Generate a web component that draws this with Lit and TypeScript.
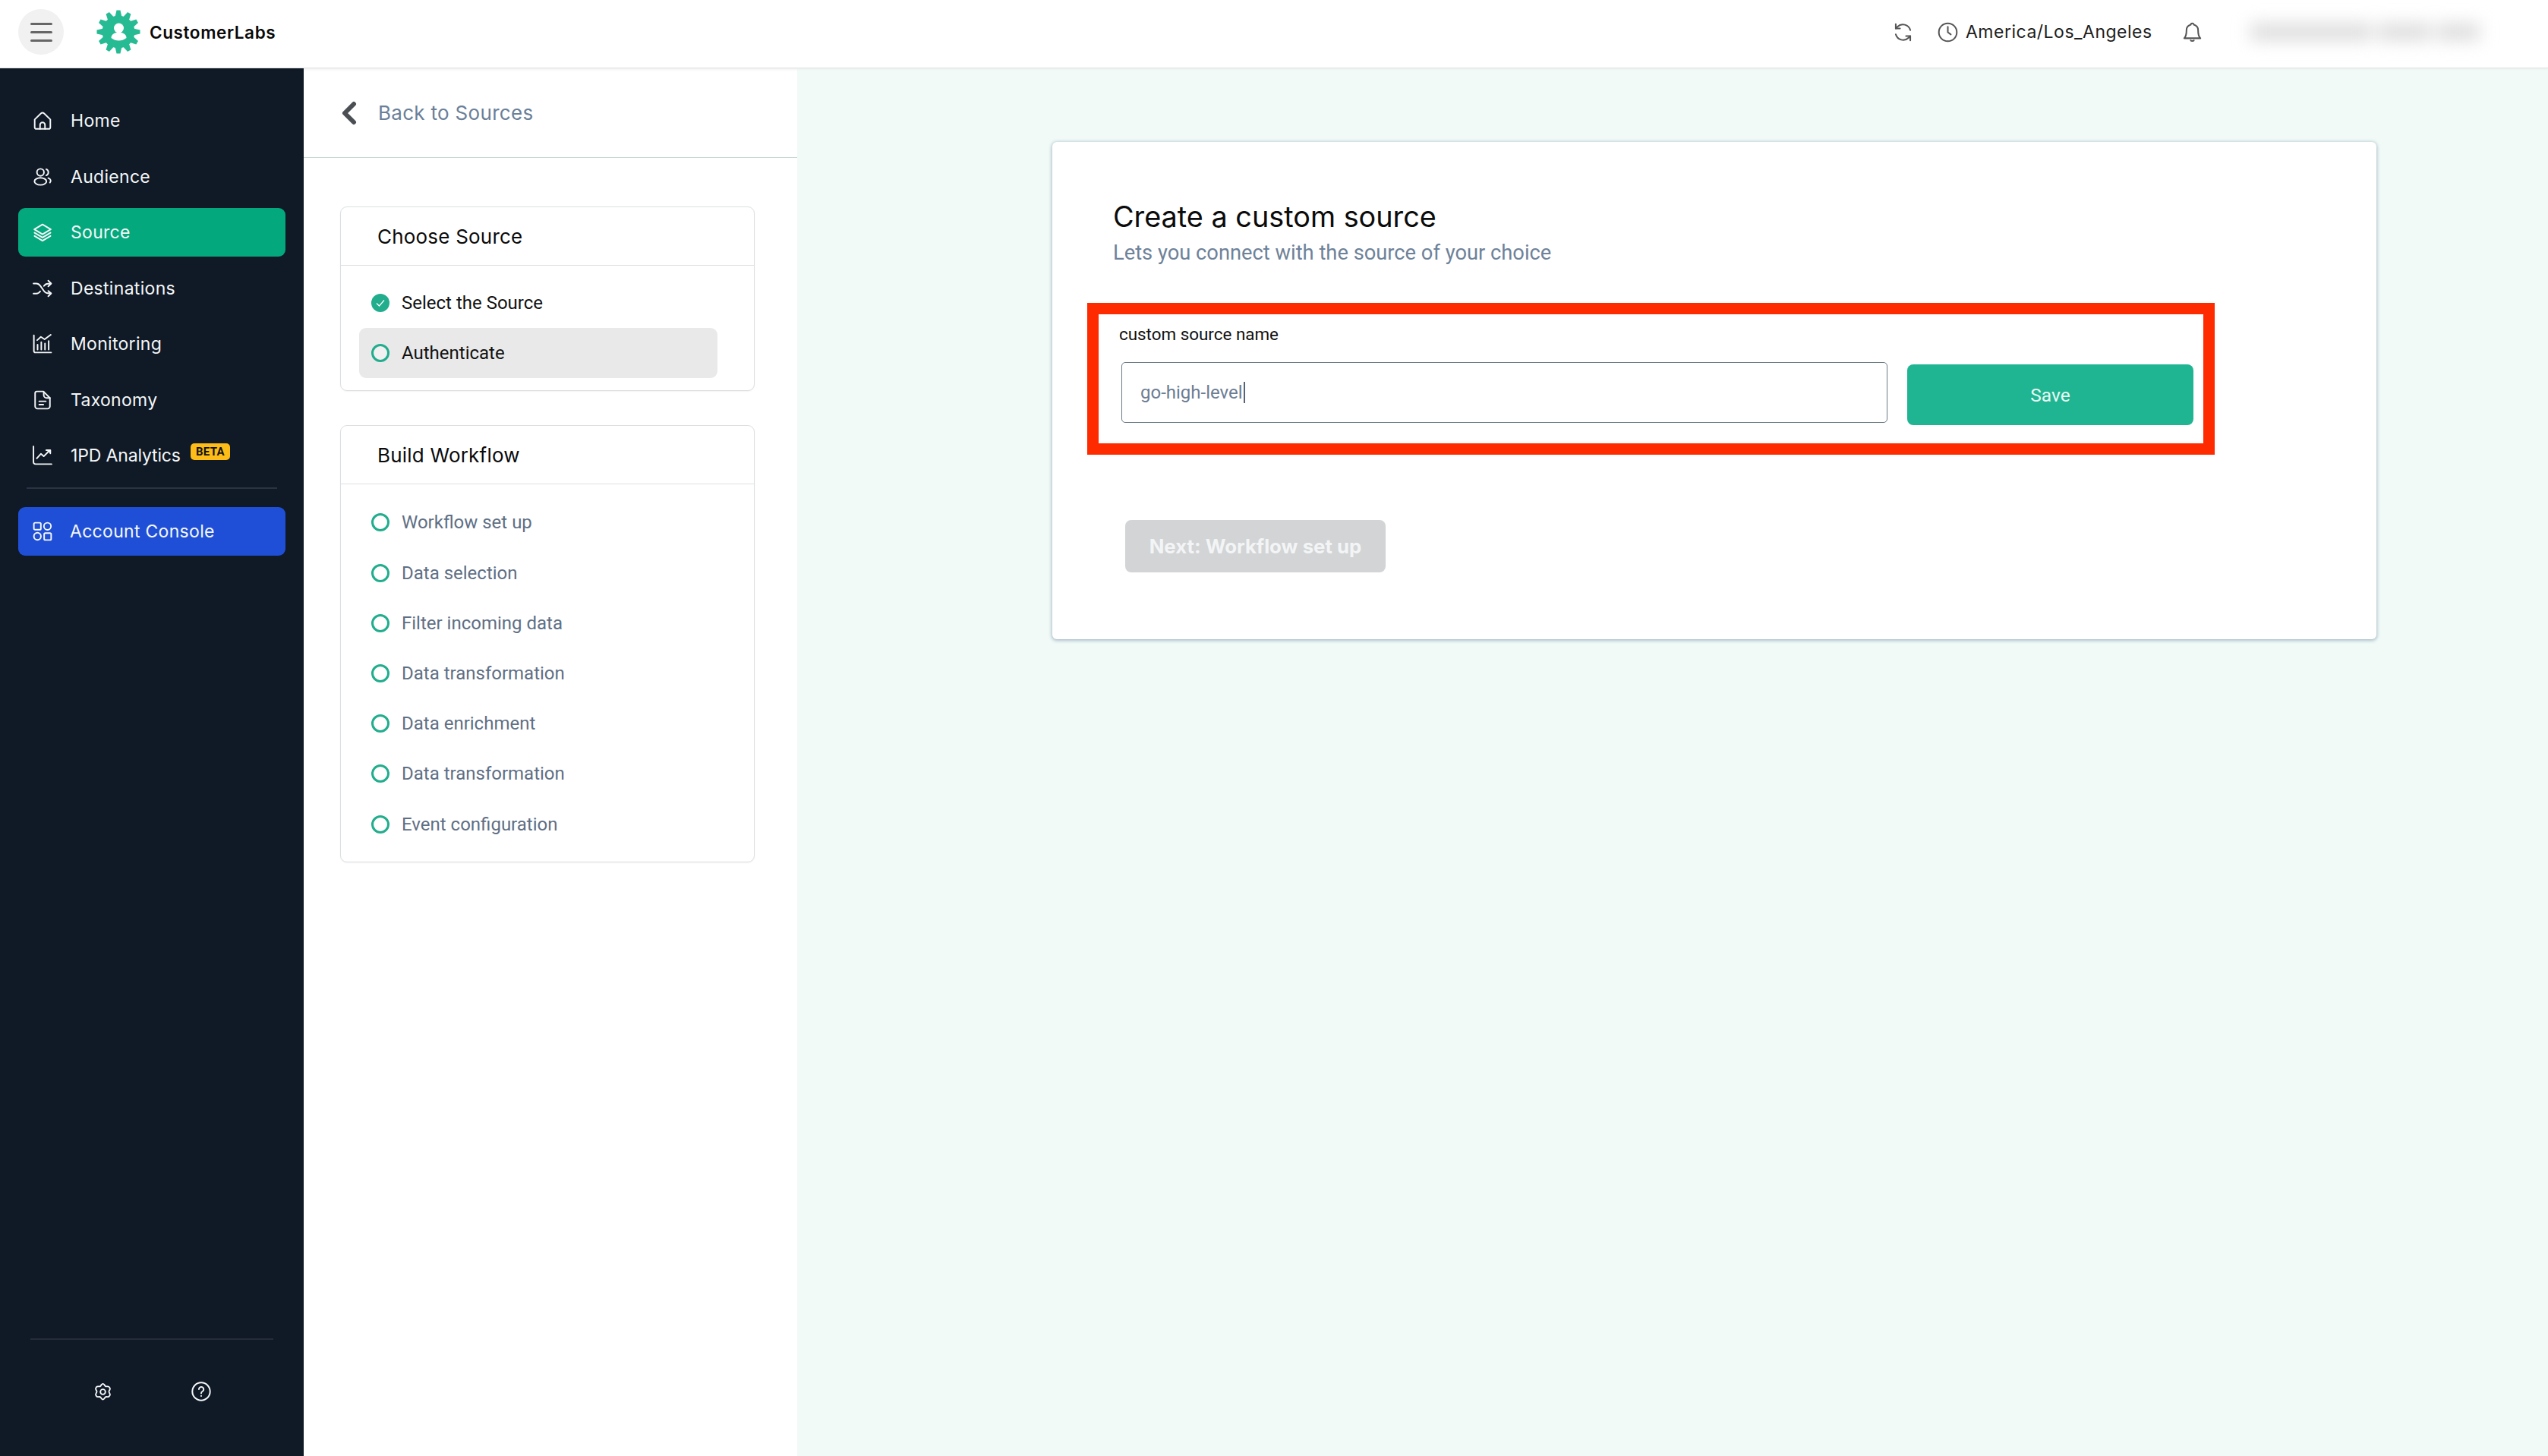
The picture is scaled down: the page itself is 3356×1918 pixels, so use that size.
import { LitElement, html, css, svg } from "lit";
import { customElement } from "lit/decorators.js";

const I = (body: unknown, cls = "ico") => html`<svg class=${cls} viewBox="0 0 24 24" fill="none" stroke="currentColor" stroke-width="1.8" stroke-linecap="round" stroke-linejoin="round">${body}</svg>`;

const home = svg`<path d="M2.5 10.5 10 3.2a3 3 0 0 1 4 0l7.500 7.300v9.500a2 2 0 0 1-2 2h-15a2 2 0 0 1-2-2z"/><path d="M9 22v-5a3 3 0 0 1 6 0v5"/>`;
const audience = svg`<circle cx="9.500" cy="6.500" r="4.300"/><ellipse cx="9.500" cy="17.500" rx="7.300" ry="4.300"/><path d="M16.500 2.700a4 4 0 0 1 0 7.500M19 13.500c3 1 3.800 3.500 2 5.500"/>`;
const layers = svg`<path d="M12 2.500 22 8.500 12 14.500 2 8.500z"/><path d="M2.300 12.500 12 18.300l9.700-5.800"/><path d="M2.300 16.500 12 22.300l9.700-5.800"/>`;
const shuffle = svg`<path d="M1 6h3.500c2 0 3.500 1 4.700 2.700l4.500 6.300c1.200 1.700 2.800 2.800 4.800 2.800H22"/><path d="M1 18.300h3.500c2 0 3.500-1.100 4.700-2.800M13.700 9c1.200-1.700 2.800-2.800 4.800-2.800H22"/><path d="M19 2.500 22.500 6 19 9.500M19 15l3.500 3-3.500 3.500"/>`;
const monitoring = svg`<path d="M1.500 1.500v19a2 2 0 0 0 2 2h19"/><path d="M6 13v6M10.500 10v9M15 11.500V19M19.500 8.500V19"/><path d="M5.500 7.500 10 3.500l4.500 3L22 1"/>`;
const taxonomy = svg`<path d="M5 1.500h8l8 8v10a3 3 0 0 1-3 3H6a3 3 0 0 1-3-3v-16a2 2 0 0 1 2-2z"/><path d="M13.500 2v4a3.500 3.500 0 0 0 3.500 3.500h4"/><path d="M8 13.500h8M8 17.500h5"/>`;
const analytics = svg`<path d="M1 1v19a2.500 2.500 0 0 0 2.500 2.500H23"/><path d="M5 15.500 10 10l3.500 3 7-7"/><path d="M16.500 5.500h5v4" fill="currentColor"/>`;
const console_ = svg`<rect x="1.500" y="1.500" width="8.500" height="8.500" rx="1.500"/><circle cx="18" cy="5.800" r="4.300"/><circle cx="5.800" cy="18" r="4.300"/><rect x="14" y="14" width="8.500" height="8.500" rx="1.500"/>`;
const gear = svg`<path d="M12 1.800c.8 0 1.300.5 1.800 1.200l1 1.400c.4.500 1 .8 1.600.8l1.800-.1c.9 0 1.600.3 2 1l.6 1c.4.700.3 1.500-.1 2.200l-.8 1.500c-.3.600-.3 1.200 0 1.800l.8 1.500c.4.700.5 1.500.1 2.200l-.6 1c-.4.700-1.100 1-2 1l-1.800-.1c-.6 0-1.200.3-1.600.8l-1 1.400c-.5.700-1 1.200-1.800 1.200s-1.300-.5-1.800-1.200l-1-1.400c-.4-.5-1-.8-1.600-.8l-1.800.1c-.9 0-1.600-.3-2-1l-.6-1c-.4-.7-.3-1.500.1-2.200l.8-1.500c.3-.6.3-1.200 0-1.800l-.8-1.500c-.4-.7-.5-1.500-.1-2.200l.6-1c.4-.7 1.100-1 2-1l1.800.1c.6 0 1.200-.3 1.600-.8l1-1.400c.5-.7 1-1.200 1.800-1.200z"/><circle cx="12" cy="12" r="3.200"/>`;
const help = svg`<circle cx="12" cy="12" r="10.800"/><path d="M9.200 9.300a2.900 2.900 0 1 1 4.500 2.500c-1 .6-1.700 1.200-1.700 2.400"/><path d="M12 17.300v.2"/>`;
const refresh = svg`<path d="M20.500 9.500A9 9 0 0 0 5.500 5.500L3.500 7.500"/><path d="M3.500 2.500v5h5"/><path d="M3.500 14.500a9 9 0 0 0 15 4l2-2"/><path d="M20.500 21.500v-5h-5"/>`;
const clock = svg`<circle cx="12" cy="12" r="10.500"/><path d="M12 5.500V12l3.500 2.500"/>`;
const bell = svg`<path d="M12 1.500c-1 0-1.800.700-1.800 1.700-3 .8-5 3.300-5 6.500 0 5-.7 7.300-2.700 9.300h19c-2-2-2.700-4.300-2.700-9.300 0-3.200-2-5.700-5-6.500 0-1-.8-1.700-1.800-1.700z"/><path d="M10.200 21.500c.5 1 3.100 1 3.600 0"/>`;

const teeth = Array.from({ length: 12 }, (_, i) => i * 30);

@customElement("app-root")
export class AppRoot extends LitElement {
  static styles = css`
    :host { display: block; width: 100%; height: 1918px; font-family: "Inter", "Liberation Sans", sans-serif; background: #f1faf7; overflow: hidden; }
    * { box-sizing: border-box; }
    .topbar { height: 90px; background: #fff; border-bottom: 1px solid #e0e3e3; display: flex; align-items: center; padding: 0 0 5px 24px; position: relative; z-index: 2; box-shadow: 0 1px 3px rgba(0,0,0,.05); }
    .burger { width: 60px; height: 60px; border-radius: 50%; background: #f1f1f1; display: flex; flex-direction: column; justify-content: center; align-items: center; gap: 8px; flex: none; }
    .burger span { width: 29px; height: 3px; border-radius: 2px; background: #666; }
    .logo { width: 58px; height: 58px; margin-left: 43px; flex: none; }
    .brand { margin-left: 12px; font-size: 22.500px; font-weight: 600; color: #0a0a0a; letter-spacing: 0.6px; }
    .right { margin-left: auto; display: flex; align-items: center; padding: 0 86px 0 0; color: #555; }
    .hicon { width: 27px; height: 27px; flex: none; stroke-width: 1.800; }
    .clock { margin-left: 32px; }
    .tz { margin-left: 10px; font-size: 23px; letter-spacing: 0.5px; color: #1d1d1d; width: 246px; white-space: nowrap; }
    .bell { margin-left: 39px; height: 29px; width: 27px; }
    .blur { margin-left: 59px; width: 310px; height: 36px; display: flex; gap: 8px; align-items: center; filter: blur(11px); padding: 0 4px; }
    .blur i { height: 22px; background: #dcdcdc; display: block; }
    .b1 { width: 160px; } .b2 { width: 70px; } .b3 { width: 56px; }

    .body { display: flex; height: 1828px; }
    .side { width: 400px; flex: none; background: #101926; color: #f4f7f8; display: flex; flex-direction: column; padding-top: 37px; }
    .nav { display: flex; flex-direction: column; gap: 9.500px; padding: 0 24px; }
    .item { height: 64px; border-radius: 9px; padding-left: 19px; display: flex; align-items: center; gap: 24px; font-size: 23px; font-weight: 400; letter-spacing: 0.3px; white-space: nowrap; }
    .item.active { background: #03a87d; }
    .item.blue { background: #1f4fd6; gap: 23px; padding-left: 19px; }
    .item .tight { letter-spacing: -0.15px; }
    .ico { width: 26px; height: 26px; flex: none; }
    .beta { display: inline-flex; align-items: center; justify-content: center; background: #fdbc18; color: #111; font-family: "Roboto", sans-serif; font-weight: 700; font-size: 15px; width: 52px; height: 22px; border-radius: 5px; margin: -10px 0 0 -11px; letter-spacing: .3px; }
    .sep { height: 2px; background: #2a3341; margin: 10px 35px 24px; }
    .foot { margin: auto 40px 0; height: 155px; border-top: 2px solid #252d3a; display: flex; justify-content: center; align-items: center; gap: 104px; padding-bottom: 17px; }
    .foot .g { width: 25px; height: 25px; }
    .foot .h { width: 26px; height: 26px; }

    .panel { width: 650px; flex: none; background: #fff; box-shadow: inset 0 6px 6px -6px rgba(0,0,0,.06); }
    .back { height: 118px; border-bottom: 1px solid #c9d6d6; display: flex; align-items: center; padding: 0 0 0 49px; gap: 27px; }
    .chev { width: 22px; height: 32px; flex: none; color: #4b4e52; }
    .back span { font-size: 26px; color: #6a7f99; letter-spacing: 0.3px; }
    .cards { padding: 64px 0 0 48px; display: flex; flex-direction: column; gap: 45px; }
    .card { width: 546px; border: 1px solid #dcdfe2; border-radius: 9px; box-shadow: 0 1px 2px rgba(0,0,0,.05); background: #fff; }
    .card h3 { margin: 0; height: 77px; border-bottom: 1px solid #dcdfe2; padding-left: 48px; display: flex; align-items: center; font-size: 26px; font-weight: 400; letter-spacing: 0.2px; color: #0b0b0b; }
    .rows { padding: 17px 0 16px 24px; }
    .rows.dark { padding-top: 16px; }
    .row { width: 472px; height: 66.200px; padding-left: 16px; display: flex; align-items: center; gap: 16px; font-family: "Roboto", sans-serif; font-size: 24px; color: #5f6f85; border-radius: 9px; }
    .rows.dark .row { color: #111; }
    .row.sel { background: #e9e9e9; }
    .dot { width: 24px; height: 24px; border-radius: 50%; border: 3px solid #22ad8d; flex: none; background: #fff; }
    .row.sel .dot { background: #f1f1f1; }
    .check { width: 24px; height: 24px; flex: none; }

    .main { flex: 1; padding: 97px 0 0 336px; }
    .box { width: 1744px; height: 655px; background: #fff; border-radius: 6px; box-shadow: 0 1px 4px 1px rgba(112,140,165,.55); padding: 74px 0 0 46px; }
    .box h1 { margin: 0 0 0 34px; font-size: 37.800px; line-height: 48px; font-weight: 400; color: #0c0c0c; }
    .box p { margin: 0 0 0 34px; padding-top: 4px; font-family: "Roboto", sans-serif; font-size: 27.300px; line-height: 40px; color: #6e8299; }
    .red { margin-top: 46px; width: 1485px; height: 200px; border: 15px solid #fe2a00; padding: 11px 0 0 27px; }
    .red label { display: block; font-family: "Roboto", sans-serif; font-size: 22.400px; line-height: 30px; color: #111; }
    .line { display: flex; align-items: flex-start; margin: 22px 0 0 3px; }
    .input { width: 1009px; height: 80px; border: 1.500px solid #6a7b85; border-radius: 5px; padding-left: 24px; display: flex; align-items: center; font-family: "Roboto", sans-serif; font-size: 24px; color: #6c7d93; }
    .caret { width: 2px; height: 28px; background: #55637a; margin-left: 1px; }
    .save { margin: 3px 0 0 26px; width: 377px; height: 80px; background: #1fb592; color: #e9fbf5; border-radius: 8px; display: flex; align-items: center; justify-content: center; font-family: "Roboto", sans-serif; font-size: 24.500px; }
    .next { margin: 86px 0 0 50px; width: 343px; height: 69px; border-radius: 8px; background: #d2d4d6; color: #f3f4f5; display: flex; align-items: center; justify-content: center; font-size: 25.800px; font-weight: 700; white-space: nowrap; }
  `;

  private logo() {
    return html`<svg class="logo" viewBox="0 0 58 58">
      <g fill="#27bb94">
        <circle cx="29" cy="29" r="21.500"/>
        ${teeth.map((a) => svg`<path d="M26.500 0.500h5l2 9h-9z" transform="rotate(${a} 29 29)"/>`)}
      </g>
      <g fill="#fff">
        <circle cx="29.500" cy="24" r="6.500"/>
        <path d="M19.500 37c0-3.500 2.500-6 6.500-7h7c4 1 6.500 3.500 6.500 7-3 2.500-6.500 3.500-10 3.500S22.500 39.500 19.500 37z"/>
      </g>
    </svg>`;
  }

  render() {
    const nav = [
      [home, "Home"], [audience, "Audience"], [layers, "Source"], [shuffle, "Destinations"],
      [monitoring, "Monitoring"], [taxonomy, "Taxonomy"],
    ];
    const steps = ["Workflow set up", "Data selection", "Filter incoming data", "Data transformation", "Data enrichment", "Data transformation", "Event configuration"];
    return html`
      <div class="topbar">
        <div class="burger"><span></span><span></span><span></span></div>
        ${this.logo()}
        <div class="brand">CustomerLabs</div>
        <div class="right">
          ${I(refresh, "hicon")}
          ${I(clock, "hicon clock")}
          <div class="tz">America/Los_Angeles</div>
          ${I(bell, "hicon bell")}
          <div class="blur"><i class="b1"></i><i class="b2"></i><i class="b3"></i></div>
        </div>
      </div>
      <div class="body">
        <aside class="side">
          <div class="nav">
            ${nav.map(([ic, t]) => html`<div class="item ${t === "Source" ? "active" : ""}">${I(ic)}<span>${t}</span></div>`)}
            <div class="item">${I(analytics)}<span class="tight">1PD Analytics</span><span class="beta">BETA</span></div>
          </div>
          <div class="sep"></div>
          <div class="nav"><div class="item blue">${I(console_)}<span>Account Console</span></div></div>
          <div class="foot">${I(gear, "g")}${I(help, "h")}</div>
        </aside>
        <section class="panel">
          <div class="back">
            <svg class="chev" viewBox="0 0 22 32" fill="none" stroke="currentColor" stroke-width="6" stroke-linecap="round" stroke-linejoin="round"><path d="M17 4 5 16l12 12"/></svg>
            <span>Back to Sources</span>
          </div>
          <div class="cards">
            <div class="card">
              <h3>Choose Source</h3>
              <div class="rows dark">
                <div class="row">
                  <svg class="check" viewBox="0 0 24 24"><circle cx="12" cy="12" r="12" fill="#22ad8d"/><path d="M7 12.500l3.500 3.500L17 8.500" fill="none" stroke="#fff" stroke-width="1.200"/></svg>
                  Select the Source
                </div>
                <div class="row sel"><span class="dot"></span>Authenticate</div>
              </div>
            </div>
            <div class="card">
              <h3>Build Workflow</h3>
              <div class="rows">
                ${steps.map((s) => html`<div class="row"><span class="dot"></span>${s}</div>`)}
              </div>
            </div>
          </div>
        </section>
        <main class="main">
          <div class="box">
            <h1>Create a custom source</h1>
            <p>Lets you connect with the source of your choice</p>
            <div class="red">
              <label>custom source name</label>
              <div class="line">
                <div class="input">go-high-level<span class="caret"></span></div>
                <div class="save">Save</div>
              </div>
            </div>
            <div class="next">Next: Workflow set up</div>
          </div>
        </main>
      </div>
    `;
  }
}
